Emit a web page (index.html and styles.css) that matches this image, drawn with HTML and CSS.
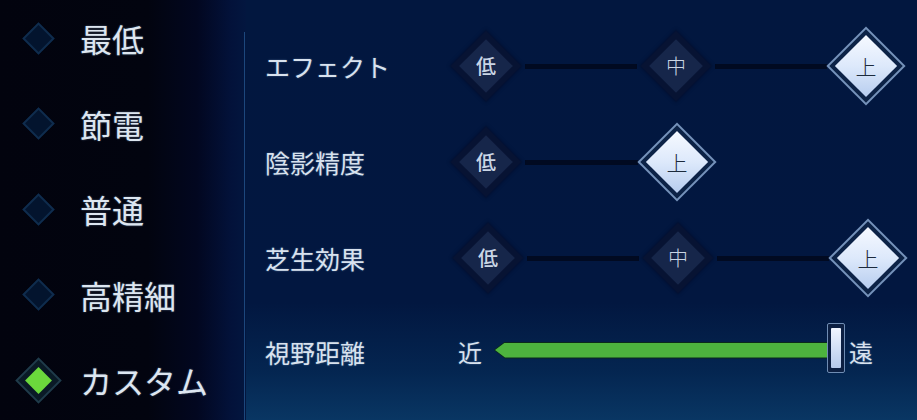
FILE: index.html
```html
<!DOCTYPE html>
<html lang="ja">
<head>
<meta charset="utf-8">
<title>グラフィック設定</title>
<link rel="stylesheet" href="styles.css">
</head>
<body>
<div class="screen">
  <aside class="presets">
    <div class="preset"><span class="mark"><i class="gem"></i></span><span class="preset-name">最低</span></div>
    <div class="preset"><span class="mark"><i class="gem"></i></span><span class="preset-name">節電</span></div>
    <div class="preset"><span class="mark"><i class="gem"></i></span><span class="preset-name">普通</span></div>
    <div class="preset"><span class="mark"><i class="gem"></i></span><span class="preset-name">高精細</span></div>
    <div class="preset"><span class="mark"><i class="gem gem-on"></i></span><span class="preset-name">カスタム</span></div>
  </aside>
  <main class="settings">
    <div class="row">
      <div class="label">エフェクト</div>
      <div class="steps steps-3">
        <div class="node"><span class="dia"><b>低</b></span></div>
        <div class="track"></div>
        <div class="node"><span class="dia"><b class="thin">中</b></span></div>
        <div class="track"></div>
        <div class="node"><span class="dia dia-on"><b>上</b></span></div>
      </div>
    </div>
    <div class="row">
      <div class="label">陰影精度</div>
      <div class="steps steps-2">
        <div class="node"><span class="dia"><b>低</b></span></div>
        <div class="track"></div>
        <div class="node"><span class="dia dia-on"><b>上</b></span></div>
      </div>
    </div>
    <div class="row">
      <div class="label">芝生効果</div>
      <div class="steps steps-3 shift">
        <div class="node"><span class="dia"><b>低</b></span></div>
        <div class="track"></div>
        <div class="node"><span class="dia"><b class="thin">中</b></span></div>
        <div class="track"></div>
        <div class="node"><span class="dia dia-on"><b>上</b></span></div>
      </div>
    </div>
    <div class="row row-last">
      <div class="label">視野距離</div>
      <div class="range">
        <span class="end end-near">近</span>
        <div class="bar"><div class="bar-fill"></div></div>
        <div class="thumb"><div class="thumb-fill"></div></div>
        <span class="end end-far">遠</span>
      </div>
    </div>
  </main>
</div>
</body>
</html>
```

FILE: styles.css
```css
html, body {
  margin: 0;
  padding: 0;
  width: 917px;
  height: 420px;
  overflow: hidden;
  background: #02163f;
  font-family: "Noto Sans CJK JP", "Noto Sans", sans-serif;
}

.screen {
  display: flex;
  width: 917px;
  height: 420px;
}

/* ---------- left preset column ---------- */
.presets {
  width: 246px;
  flex: none;
  box-sizing: border-box;
  padding-top: 18px;
  display: flex;
  flex-direction: column;
  gap: 45.5px;
  background:
    linear-gradient(#1c477c, #1c477c) no-repeat right 1px top 32px / 1px calc(100% - 32px),
    linear-gradient(to right, #02030e 0%, #02040f 60%, #020720 80%, #03123a 94%, #03163f 100%);
}

.preset {
  height: 40px;
  display: flex;
  align-items: center;
  padding-left: 22px;
  gap: 25px;
}

.mark {
  width: 33px;
  height: 33px;
  display: flex;
  align-items: center;
  justify-content: center;
}

.gem {
  display: block;
  width: 19px;
  height: 19px;
  transform: rotate(45deg);
  background: #03142e;
  border: 2px solid #0f2c4d;
}

.gem-on {
  width: 19px;
  height: 19px;
  border: none;
  background: #6bd83c;
  box-shadow: 0 0 0 5px #0a1a26, 0 0 0 7px #1f3b4a;
}

.preset-name {
  font-size: 32px;
  line-height: 40px;
  font-weight: 400;
  color: #dde6f0;
  text-shadow: 0 0 2px rgba(160, 190, 230, 0.5);
}

/* ---------- right settings ---------- */
.settings {
  flex: 1;
  box-sizing: border-box;
  padding-left: 19px;
  padding-top: 18px;
  display: flex;
  flex-direction: column;
  background: linear-gradient(to bottom, #02173f 0%, #021740 72%, #042550 88%, #093663 100%);
}

.row {
  height: 96px;
  display: flex;
  align-items: center;
}

.row-last {
  height: 92px;
}

.label {
  width: 182px;
  flex: none;
  font-size: 25px;
  font-weight: 400;
  color: #d8e2ee;
  text-shadow: 0 0 2px rgba(160, 190, 230, 0.45);
}

.steps {
  display: flex;
  align-items: center;
}

.steps-3 { width: 458px; }
.steps-2 { width: 269px; }
.shift { margin-left: 2px; }

.node {
  width: 78px;
  height: 78px;
  flex: none;
  display: flex;
  align-items: center;
  justify-content: center;
}

.track {
  flex: 1;
  height: 5px;
  background: #010a21;
}

.dia {
  width: 38px;
  height: 38px;
  transform: rotate(45deg);
  background: #16264a;
  box-shadow: 0 0 0 6px #071333, 0 0 3px 7px rgba(3, 12, 38, 0.5);
  display: flex;
  align-items: center;
  justify-content: center;
}

.dia b {
  transform: rotate(-45deg);
  font-size: 20px;
  font-weight: 500;
  color: #c9d5e5;
  line-height: 1;
}

.dia b.thin {
  font-weight: 300;
}

.dia-on {
  width: 44px;
  height: 44px;
  background: linear-gradient(135deg, #f6f9ff 0%, #dde9fb 50%, #b7cdef 100%);
  box-shadow: 0 0 0 4px #0c2246, 0 0 0 6px #7592ba;
}

.dia-on b {
  font-weight: 300;
  color: #1c2a3c;
  font-size: 21px;
}

/* ---------- range slider ---------- */
.range {
  display: flex;
  align-items: center;
  padding-left: 11px;
}

.end {
  font-size: 24px;
  font-weight: 400;
  color: #d8e2ee;
  line-height: 1;
  text-shadow: 0 0 2px rgba(160, 190, 230, 0.45);
}

.bar {
  margin-left: 12px;
  width: 333px;
  height: 17px;
  background: #0b2a1a;
  clip-path: polygon(11px 0, 100% 0, 100% 100%, 11px 100%, 0 50%);
  display: flex;
  padding: 1px 0 1px 1px;
  box-sizing: border-box;
  margin-top: -4px;
}

.bar-fill {
  flex: 1;
  background: #4db33e;
  clip-path: polygon(10px 0, 100% 0, 100% 100%, 10px 100%, 0 50%);
}

.thumb {
  width: 18px;
  height: 50px;
  box-sizing: border-box;
  border: 1px solid #6f8cb3;
  border-radius: 2px;
  background: #0c1f42;
  padding: 4px 3px;
  margin-top: -8px;
  display: flex;
}

.thumb-fill {
  flex: 1;
  background: linear-gradient(to bottom, #f0f5ff, #b5caec);
  border-radius: 1px;
}

.end-far {
  margin-left: 4px;
}
```
